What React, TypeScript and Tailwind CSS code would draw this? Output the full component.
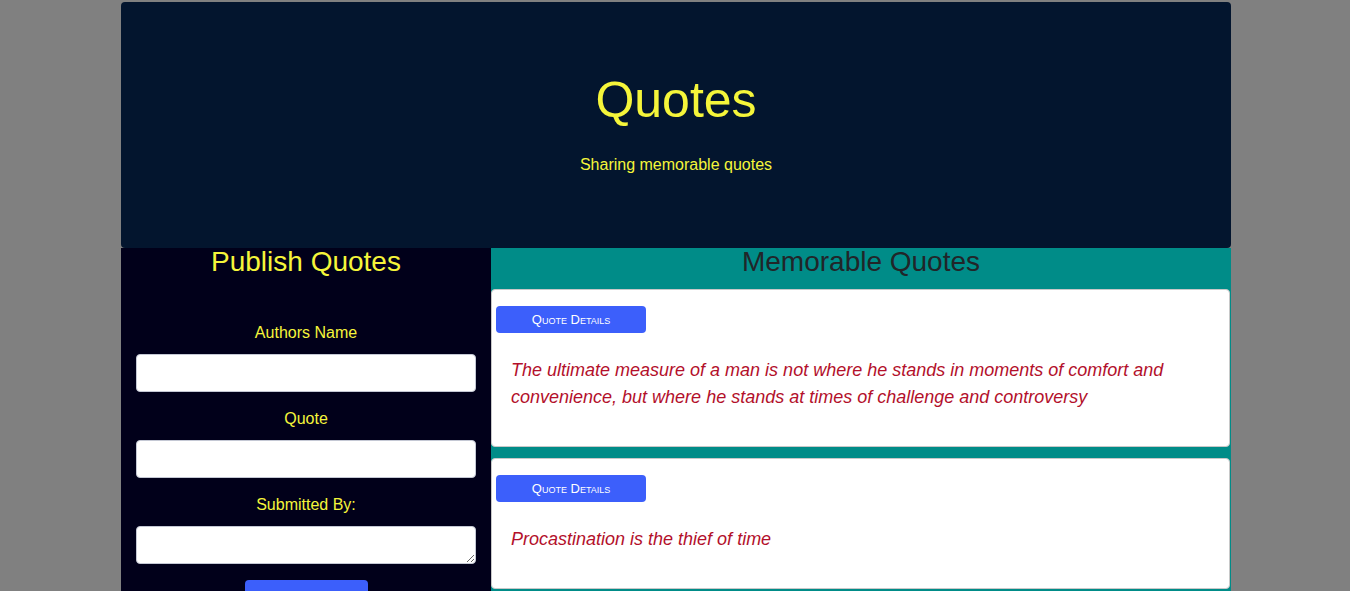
import { FC } from 'react';

const quotes = [
  'The ultimate measure of a man is not where he stands in moments of comfort and convenience, but where he stands at times of challenge and controversy',
  'Procastination is the thief of time',
];

const QuoteCard: FC<{ text: string }> = ({ text }) => (
  <div className="bg-white border border-[#c8c8c8] rounded-[4px] mb-[11px]">
    <button className="ml-[4px] mt-[16px] w-[150px] h-[27px] bg-[#3c5ffb] text-white text-[13px] rounded-[4px] [font-variant:small-caps] leading-none">
      Quote Details
    </button>
    <p className="px-[19px] pt-[24px] pb-[35px] text-[18px] leading-[27px] italic text-[#b3102b]">
      {text}
    </p>
  </div>
);

const Field: FC<{ label: string; area?: boolean }> = ({ label, area }) => (
  <div className="flex flex-col items-center">
    <label className="text-[16px] leading-[24px] text-[#f5f53a] mb-[9px]">{label}</label>
    {area ? (
      <textarea className="w-[340px] h-[38px] bg-white border border-[#c4c8d4] rounded-[4px] mb-[15px] resize-y block" />
    ) : (
      <input className="w-[340px] h-[38px] bg-white border border-[#c4c8d4] rounded-[4px] mb-[15px]" />
    )}
  </div>
);

export default function App() {
  return (
    <div className="min-h-[591px] bg-[#808080] pt-[2px] font-['Liberation_Sans',Arial,sans-serif]">
      <div className="w-[1110px] ml-[121px]">
        {/* Header */}
        <header className="h-[246px] bg-[#03152e] rounded-[4px] flex flex-col items-center pt-[68px]">
          <h1 className="text-[50px] leading-[60px] text-[#f5f53a]">Quotes</h1>
          <p className="mt-[23px] text-[16px] leading-[24px] text-[#f5f53a]">Sharing memorable quotes</p>
        </header>

        <div className="flex">
          {/* Publish form */}
          <div className="w-[370px] bg-[#01001a] flex flex-col items-center">
            <h2 className="pt-[1px] text-[28px] leading-[26px] text-[#f5f53a]">Publish Quotes</h2>
            <div className="mt-[46px] flex flex-col items-center">
              <Field label="Authors Name" />
              <Field label="Quote" />
              <Field label="Submitted By:" area />
              <button className="mt-[1px] w-[123px] h-[38px] bg-[#3c5ffb] text-white rounded-[4px]">
                Publish
              </button>
            </div>
          </div>

          {/* Quote list */}
          <div className="w-[740px] bg-[#008c88] pr-[1px]">
            <h2 className="pt-[1px] text-[28px] leading-[26px] pb-[14px] text-center text-[#212529] pl-[1px]">Memorable Quotes</h2>
            {quotes.map((q) => (
              <QuoteCard key={q} text={q} />
            ))}
          </div>
        </div>
      </div>
    </div>
  );
}
